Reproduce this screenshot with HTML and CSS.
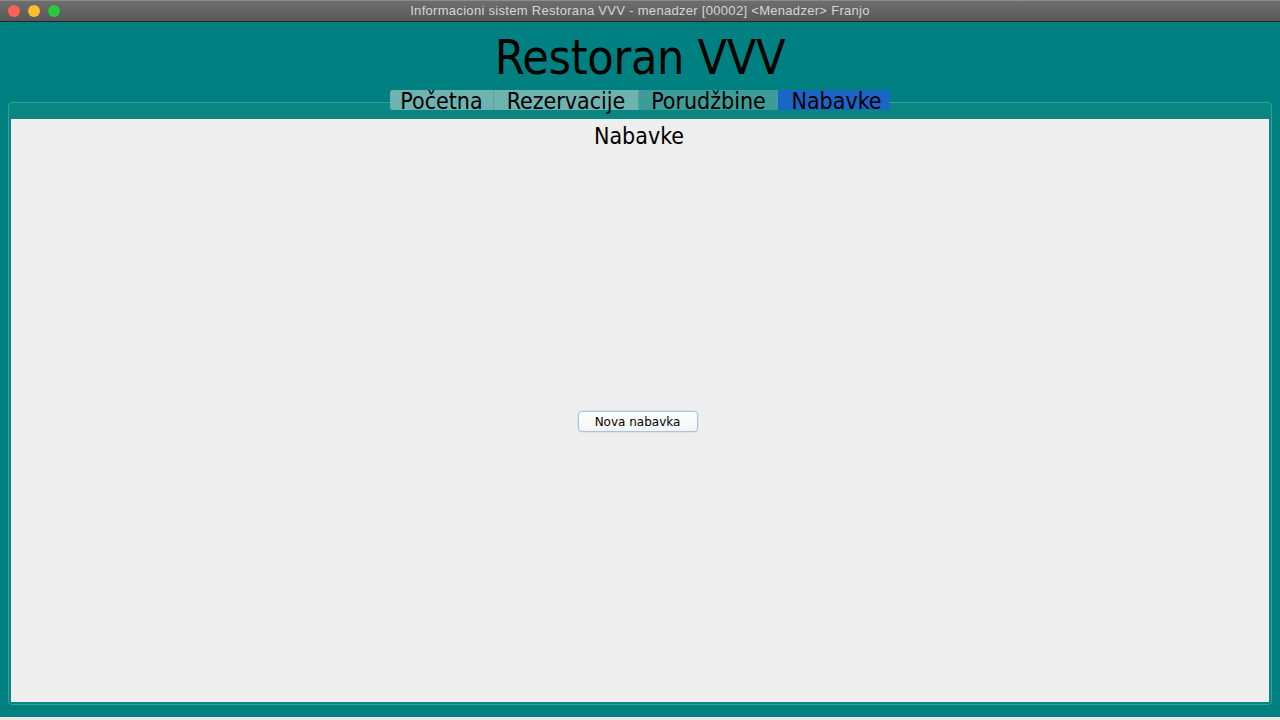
FILE: index.html
```html
<!DOCTYPE html>
<html lang="sr">
<head>
<meta charset="utf-8">
<title>Informacioni sistem Restorana VVV</title>
<link rel="stylesheet" href="styles.css">
</head>
<body>
<div class="window">
  <div class="titlebar">
    <div class="lights">
      <span class="light red"></span>
      <span class="light yellow"></span>
      <span class="light green"></span>
    </div>
    <div class="title">Informacioni sistem Restorana VVV - menadzer [00002] &lt;Menadzer&gt; Franjo</div>
  </div>
  <div class="app">
    <h1 class="brand">Restoran VVV</h1>
    <div class="tabs">
      <span class="tab tab-light t1">Početna</span>
      <span class="tab tab-light t2">Rezervacije</span>
      <span class="tab tab-mid t3">Porudžbine</span>
      <span class="tab tab-active t4">Nabavke</span>
    </div>
    <div class="pane">
      <div class="content">
        <div class="heading">Nabavke</div>
        <div class="center">
          <button class="btn">Nova nabavka</button>
        </div>
      </div>
    </div>
  </div>
  <div class="bottom-strip"></div>
</div>
</body>
</html>
```

FILE: styles.css
```css
* { box-sizing: border-box; }
html, body { margin: 0; padding: 0; }
body {
  width: 1280px;
  height: 720px;
  overflow: hidden;
  background: #ececec;
  font-family: "DejaVu Sans Condensed", "DejaVu Sans", sans-serif;
}
.window {
  width: 1280px;
  height: 720px;
  display: flex;
  flex-direction: column;
}
.titlebar {
  height: 22px;
  flex: none;
  display: flex;
  align-items: center;
  justify-content: center;
  position: relative;
  background: linear-gradient(#6e6e6e, #585858);
  border-bottom: 1px solid #262626;
  border-top: 1px solid #8a8a8a;
}
.lights {
  position: absolute;
  left: 8px;
  top: 4px;
  display: flex;
  gap: 8px;
}
.light {
  width: 12px;
  height: 12px;
  border-radius: 50%;
  display: block;
}
.red { background: #fe5f57; }
.yellow { background: #febc2e; }
.green { background: #28c840; }
.title {
  font-family: "Liberation Sans", "Inter", sans-serif;
  font-size: 13px;
  letter-spacing: 0.3px;
  color: #d6d6d6;
  line-height: 20px;
}
.app {
  flex: 1;
  background: #008080;
  padding: 0 8px 12px 8px;
  display: flex;
  flex-direction: column;
}
.brand {
  margin: 7px 0 0 0;
  font-weight: normal;
  font-size: 48px;
  line-height: 56px;
  text-align: center;
  color: #000;
  letter-spacing: -0.3px;
}
.tabs {
  margin: 5px auto -8px auto;
  display: flex;
  position: relative;
  z-index: 1;
  height: 20px;
}
.tab {
  font-size: 23px;
  line-height: 22px;
  height: 20px;
  text-align: center;
  color: #000;
  border-left: 1px solid #5c9f9d;
}
.t1 { width: 103px; border-left: none; border-radius: 3px 0 0 3px; }
.t2 { width: 145px; }
.t3 { width: 140px; }
.t4 { width: 112px; border-radius: 0 3px 3px 0; padding-left: 4px; }
.tab-light { background: #6fb3b1; }
.tab-mid { background: #3e9c98; border-left-color: #4f9f9c; }
.tab-active { background: #1a66c6; border-left-color: #1a66c6; }
.pane {
  flex: 1;
  border: 1px solid #34a09b;
  border-radius: 4px;
  background: #098681;
  padding: 16px 2px 2px 2px;
  display: flex;
}
.content {
  flex: 1;
  background: #eeeeee;
  display: flex;
  flex-direction: column;
}
.heading {
  text-align: center;
  font-size: 23px;
  line-height: 28px;
  padding-top: 3px;
  padding-right: 2px;
  color: #000;
}
.center {
  flex: 1;
  display: flex;
  align-items: center;
  justify-content: center;
  padding-bottom: 9px;
}
.btn {
  width: 120px;
  height: 21px;
  padding: 0;
  margin-right: 5px;
  font-family: "DejaVu Sans", "Liberation Sans", sans-serif;
  font-size: 12px;
  color: #000;
  background: linear-gradient(#ffffff, #f4f4f4);
  border: 1px solid #a8c3de;
  border-radius: 4px;
  box-shadow: 0 0 0 0.5px #c9d9ea;
}
.bottom-strip {
  height: 3px;
  flex: none;
  background: #e8e8e8;
}
```
